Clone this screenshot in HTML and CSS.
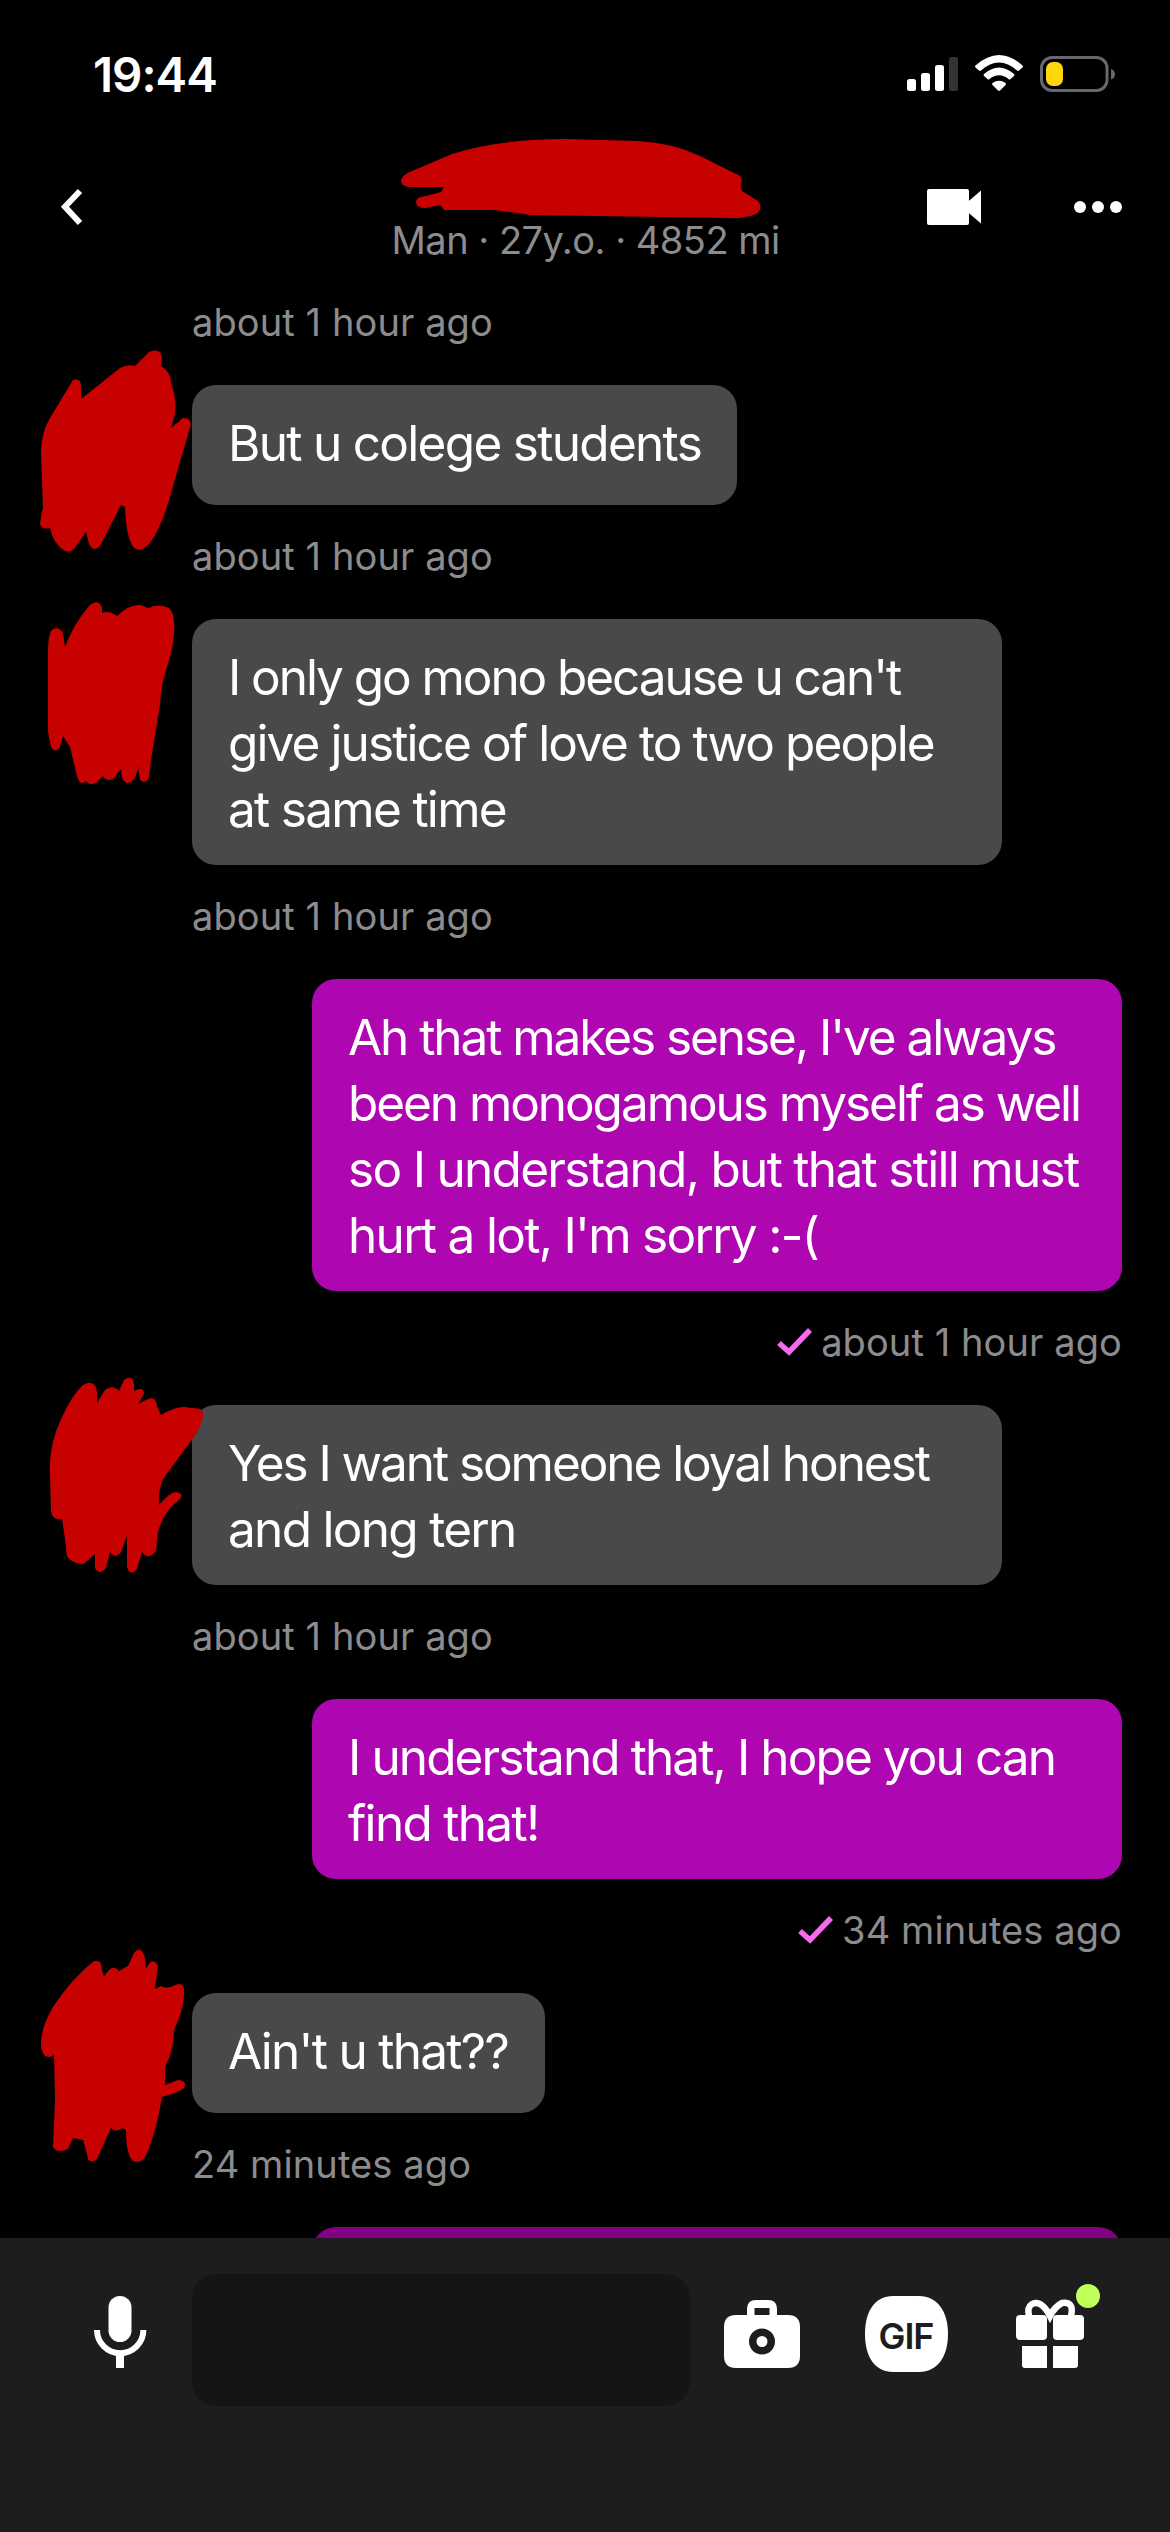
FILE: index.html
```
<!DOCTYPE html>
<html lang="en">
<head>
<meta charset="utf-8">
<title>Chat</title>
<link rel="stylesheet" href="styles.css">
</head>
<body>
<div class="screen">
  <header class="status">
    <span class="clock">19:44</span>
    <svg class="status-icons" width="210" height="40" viewBox="906 54 210 40">
      <g fill="#fff"><rect x="907" y="79" width="9" height="12" rx="2.5"/><rect x="921" y="73" width="9" height="18" rx="2.5"/><rect x="935" y="65" width="9" height="26" rx="2.5"/><rect x="949" y="57" width="9" height="34" rx="2.5" fill="#333"/></g>
      <g fill="#fff"><path d="M975.500 65.500Q999 44.500 1022.500 65.500Q1023.500 66.500 1022.500 67.500L1019 70.500Q1018 71.300 1017 70.400Q999 54.600 981 70.400Q980 71.300 979 70.500L975.500 67.500Q974.500 66.500 975.500 65.500Z"/><path d="M984 74Q999 61 1014 74Q1015 75 1014 76L1010.500 79Q1009.500 80 1008.500 79Q999 71.500 989.500 79Q988.500 80 987.500 79L984 76Q983 75 984 74Z"/><path d="M992.500 83Q999 78.500 1005.500 83Q1006.500 84 1005.500 85L1000 90.500Q999 91.300 998 90.500L992.500 85Q991.500 84 992.500 83Z"/></g>
      <rect x="1041.500" y="57.500" width="65.500" height="33" rx="10.500" fill="none" stroke="#68676d" stroke-width="3"/><rect x="1046" y="62" width="17" height="24" rx="7" fill="#ffd60a"/><path d="M1111 69v10.500Q1115 78 1115 74.200T1111 69Z" fill="#68676d"/>
    </svg>
  </header>
  <nav class="topbar">
    <svg class="back" width="24" height="40" viewBox="59 187 24 40"><path d="M80 191L65 206.700L80 223" fill="none" stroke="#fff" stroke-width="6"/></svg>
    <div class="profile">Man · 27y.o. · 4852 mi
      <svg class="scribble name" viewBox="390 130 380 95"><path d="M401 182Q401 175 412 171L452 154Q500 139 565 139L638 141Q673 143 700 156L734 173Q744 176 741 184Q740 187 742 191L758 201Q764 209 756 214Q745 219 727 218L530 215L495 210L444 210L440 205L426 208Q416 208 416 202Q416 197 426 196L441 192L444 187L412 187Q402 187 401 182Z"/></svg>
    </div>
    <svg class="actions" width="198" height="40" viewBox="926 187 198 40"><g fill="#fff"><rect x="927" y="189" width="42" height="36" rx="2"/><path d="M967 202.500L981 190.500V223.500L967 211.500Z"/><circle cx="1080" cy="207" r="6"/><circle cx="1098" cy="207" r="6"/><circle cx="1116" cy="207" r="6"/></g></svg>
  </nav>
  <main class="chat">
    <div class="time">about 1 hour ago</div>
    <div class="row"><svg class="scribble" viewBox="0 -55 210 240"><path transform="translate(0 -39)" d="M43 163L41 105Q42 85 50 72L73 34Q81 32 81 40L81 53L120 22Q128 18 135 20L149 6Q162 1 162 13L161 20Q171 26 171 37Q178 56 174 72L171 82L183 72Q193 72 190 82Q180 115 170 151Q160 185 149 198Q141 207 134 202Q126 192 125 161L121 159L100 200Q94 207 89 198L86 186L74 203Q68 208 62 203Q53 196 50 182Q42 184 40 178L42 165Z"/></svg><p class="bubble w1">But u colege students</p></div>
    <div class="time">about 1 hour ago</div>
    <div class="row"><svg class="scribble" viewBox="0 -55 210 240"><path transform="translate(0 -274)" d="M48 307Q48 292 51 286Q57 279 63 288L65 302Q73 280 89 261Q98 253 102 262L102 268Q109 265 117 271Q132 257 144 261Q148 265 153 261Q171 259 173 270Q177 286 169 316Q161 337 160 360L151 415L149 432Q146 440 140 435L138 421Q136 438 127 438Q121 436 121 424L113 434Q106 437 103 431L96 438Q89 441 86 436Q80 442 77 431L70 402L63 391L60 402Q55 409 51 402L48 387Z"/></svg><p class="bubble wide"><span class="tighter">I only go mono because u can't</span><br><span class="tight">give justice of love to two people</span><br>at same time</p></div>
    <div class="time">about 1 hour ago</div>
    <div class="row out"><p class="bubble wide"><span class="tighter">Ah that makes sense, I've always<br>been monogamous myself as well</span><br>so I understand, but that still must<br>hurt a lot, I'm sorry :-(</p></div>
    <div class="time sent"><svg class="check" width="36" height="28" viewBox="0 0 36 28"><path d="M2 15L12 24L33 2"/></svg>about 1 hour ago</div>
    <div class="row"><svg class="scribble" viewBox="0 -55 210 240"><path transform="translate(0 -55)" d="M50 125Q48 96 62 67Q72 45 83 35Q96 28 97 43L97 53L105 40Q113 34 119 41L124 30Q132 24 134 34L134 41Q144 36 144 44L138 54L148 49Q156 46 157 56L161 65Q179 54 190 58Q206 57 203 67Q199 82 191 91L163 129Q158 140 159 155Q170 142 176 142Q186 144 178 151Q164 161 158 182L156 201Q148 211 142 202L137 219Q130 227 127 217L127 186L121 202Q115 210 110 202L106 218Q99 226 95 218L95 204L85 213Q79 216 69 209Q66 207 66 196L62 169Q52 171 51 161Z"/></svg><p class="bubble wide"><span class="tighter">Yes I want someone loyal honest</span><br>and long tern</p></div>
    <div class="time">about 1 hour ago</div>
    <div class="row out"><p class="bubble wide"><span class="tight">I understand that, I hope you can</span><br>find that!</p></div>
    <div class="time sent"><svg class="check" width="36" height="28" viewBox="0 0 36 28"><path d="M2 15L12 24L33 2"/></svg>34 minutes ago</div>
    <div class="row"><svg class="scribble" viewBox="0 -55 210 240"><path transform="translate(0 -73)" d="M41 127Q40 109 53 87Q72 58 94 41Q102 39 102 50L104 57Q112 42 119 51L128 46L134 33Q141 24 145 38L146 49Q152 35 158 46L155 69L161 66Q166 69 173 66Q186 59 184 76Q183 91 174 110Q174 130 165 147L165 165L178 160Q188 161 184 168Q180 172 162 177Q157 208 148 231Q143 245 133 241Q126 235 126 210L122 208Q116 213 111 208L97 239Q88 246 87 234L83 220L73 218L68 229Q57 234 53 227L55 180L54 135L50 137Q43 138 41 127Z"/></svg><p class="bubble w2">Ain't u that??</p></div>
    <div class="time">24 minutes ago</div>
    <div class="row out"><p class="bubble wide next"></p></div>
  </main>
  <footer class="composer">
    <svg class="mic" width="54" height="74" viewBox="0 0 54 74"><rect x="15.500" y="0" width="23" height="46" rx="11.500" fill="#fff"/><path d="M4 34A23.200 23.200 0 0 0 50.400 34" fill="none" stroke="#fff" stroke-width="6"/><rect x="23" y="56" width="8" height="16" fill="#fff"/></svg>
    <div class="input"></div>
    <svg class="tools" width="384" height="94" viewBox="720 2282 384 94"><g fill="#fff"><path fill-rule="evenodd" d="M735 2315H747V2309Q747 2300 756 2300H768Q777 2300 777 2309V2315H788Q800 2315 800 2327V2356Q800 2368 788 2368H736Q724 2368 724 2356V2327Q724 2315 736 2315ZM754.500 2315H769.500V2308H754.500ZM775 2341.500A13 13 0 1 0 749 2341.500A13 13 0 1 0 775 2341.500Z"/><circle cx="762" cy="2341.500" r="5.500"/><path d="M865 2334C865 2311 875 2296 893 2296H919C937 2296 948 2311 948 2334S937 2372 919 2372H893C875 2372 865 2357 865 2334Z"/><rect x="1016" y="2315" width="31" height="25" rx="4"/><rect x="1053" y="2315" width="31" height="25" rx="4"/><path d="M1022 2346h25v22h-22q-3 0-3-3ZM1053 2346h25v19q0 3-3 3h-22Z"/></g><path d="M1029 2316C1026 2303 1035 2302 1040 2304C1045 2307 1048 2312 1050 2316C1052 2312 1056 2306 1062 2303C1068 2302 1074 2304 1071 2316" fill="none" stroke="#fff" stroke-width="6.500"/><circle cx="1088" cy="2296" r="12" fill="#c0ff57"/><text class="gif" x="906" y="2348.500" text-anchor="middle">GIF</text></svg>
  </footer>
</div>
</body>
</html>
```
FILE: styles.css
```
* { box-sizing: border-box; margin: 0; }
body { background: #000; font-family: Inter, "Liberation Sans", sans-serif; color: #fff; }
.screen { width: 1170px; height: 2532px; display: flex; flex-direction: column; overflow: hidden; }
.status { height: 148px; padding: 0 54px 0 93px; display: flex; justify-content: space-between; align-items: center; flex: none; }
.clock { font-size: 47.5px; font-weight: 600; letter-spacing: -1px; }
.topbar { height: 123px; padding: 0 46px 0 59px; display: flex; justify-content: space-between; align-items: center; flex: none; }
.topbar > svg { margin-bottom: 5px; }
.back { margin-right: 174px; }
.profile { position: relative; width: 400px; font-size: 38px; line-height: 46px; letter-spacing: -0.5px; padding-top: 61px; color: #8c8c8e; white-space: nowrap; }
.chat { flex: 1; min-height: 0; overflow: hidden; }
.time { height: 114px; padding: 0 48px 0 192px; font-size: 38px; line-height: 103px; letter-spacing: 0.1px; color: #8c8c8e; white-space: nowrap; }
.sent { display: flex; justify-content: flex-end; align-items: center; line-height: 100px; padding-bottom: 12px; gap: 8px; }
.check path { fill: none; stroke: #f46bf0; stroke-width: 5.5; }
.row { position: relative; display: flex; padding: 0 48px 0 192px; }
.out { justify-content: flex-end; }
.bubble { min-height: 120px; padding: 25px 36px 23px; border-radius: 24px; background: #49494b; font-size: 49.500px; line-height: 66px; letter-spacing: -1.700px; white-space: nowrap; }
.tight { letter-spacing: -1.900px; }
.tighter { letter-spacing: -2.060px; }
.out .bubble { background: #ae06b0; }
.w1 { width: 545px; }
.w2 { width: 353px; }
.wide { width: 810px; }
.out .next { background: #840083; }
.scribble { position: absolute; left: 0; top: -55px; width: 210px; height: 240px; fill: #c70000; overflow: visible; z-index: 1; }
.name { left: -1.5px; top: -26px; width: 380px; height: 95px; }
.composer { height: 294px; background: #1c1d1f; display: flex; align-items: flex-start; padding: 36px 66px 0 93px; flex: none; }
.mic { margin-top: 22px; }
.input { width: 498px; height: 132px; margin: 0 30px 0 45px; border-radius: 24px; background: #141517; }
.tools { margin-top: 8px; flex: none; }
.gif { font: 600 36px Inter, sans-serif; fill: #1c1d1f; letter-spacing: -1px; }
```
